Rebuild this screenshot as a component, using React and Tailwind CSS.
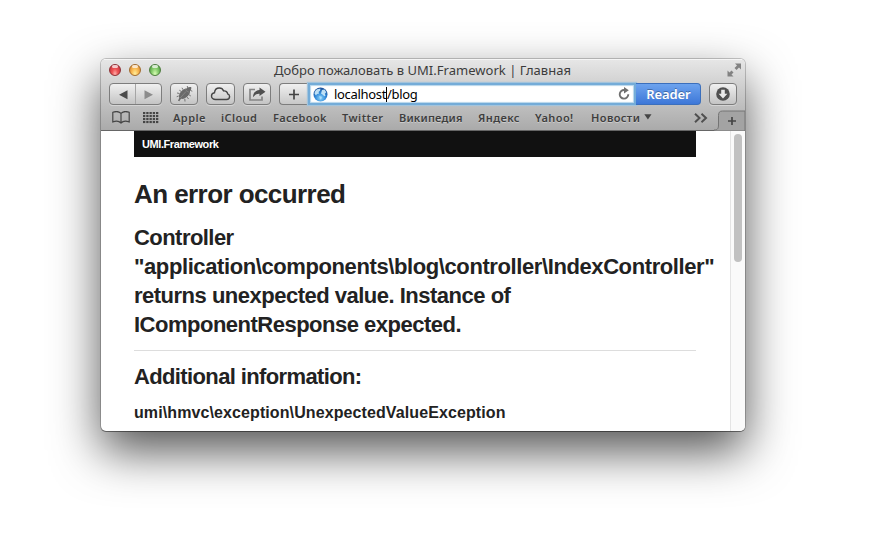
import React from "react";

const bookmarks = [
  { label: "Apple", box: "w-[48px]", track: "tracking-[0.45px]" },
  { label: "iCloud", box: "w-[52px]", track: "tracking-[0.4px]" },
  { label: "Facebook", box: "w-[69px]", track: "tracking-[0.32px]" },
  { label: "Twitter", box: "w-[57px]", track: "tracking-[0.45px]" },
  { label: "Википедия", box: "w-[79px]", track: "tracking-[0.22px]" },
  { label: "Яндекс", box: "w-[57px]", track: "tracking-[0.4px]" },
  { label: "Yahoo!", box: "w-[56px]", track: "tracking-[0.4px]" },
  { label: "Новости", box: "w-[53px]", track: "tracking-[0.4px]" },
];

const lights = [
  "border-[#8d3034] bg-[radial-gradient(ellipse_at_50%_90%,#ffb0ac_0%,#ee5557_40%,#d23c45_75%,#a82a30_100%)]",
  "border-[#a06a2c] bg-[radial-gradient(ellipse_at_50%_90%,#fff0a0_0%,#fbc25c_40%,#e69a3c_75%,#b87a34_100%)]",
  "border-[#4c7c3c] bg-[radial-gradient(ellipse_at_50%_90%,#dcffb8_0%,#92d476_40%,#62ae50_75%,#4c8a40_100%)]",
];

function Button({ className, children }) {
  return (
    <div
      className={
        "flex h-[22px] items-center justify-center rounded-[4px] border border-[#7d7d7d] bg-linear-to-b from-[#f0f0f0] to-[#c4c4c4] shadow-[0_1px_0_rgba(255,255,255,0.35)] " +
        className
      }
    >
      {children}
    </div>
  );
}

function BugIcon() {
  return (
    <svg width="18" height="18" viewBox="0 0 18 18">
      <path d="M4.300 12.800C3.300 10.500 4.900 7.300 7.400 5.200 8.800 4 10.300 3.500 11.500 3.500 12.700 2.200 14.500 2 16.200 2c.3 1.700 0 3.200-1.200 4.200.1 1.500-.5 3-1.700 4.300-2.300 2.700-5.200 3.900-7.300 3.300L4.300 16.300l-1.300-.6z" fill="#6a6a6a" />
      <path d="M8 4.700 7 2.800M6 6.300 4.300 5.200M4.500 8.500 2 8M3.700 11 1.700 11.700M14 9.800 15.800 11M12.300 12.200 13.500 14M9.800 13.900 10 16.500M12.800 3 12.200 1M15.500 5.500 17.300 6.200" fill="none" stroke="#6a6a6a" strokeWidth=".9" />
      <path d="M10.500 4.300C11.300 5.800 12.600 6.800 14.200 7.200M11 6.500 5.200 13" fill="none" stroke="#8e8e8e" strokeWidth=".7" />
    </svg>
  );
}

function Toolbar() {
  return (
    <div className="flex h-[22px] pl-2">
      <Button className="w-[53px]">
        <svg width="51" height="20" viewBox="0 0 51 20">
          <path d="M17.500 6.200v9L9 10.700z" fill="#4b4b4b" />
          <path d="M34.500 6.200v9l8.500-4.500z" fill="#8c8c8c" />
          <path d="M25.500 0v20" stroke="#a5a5a5" />
        </svg>
      </Button>
      <Button className="ml-2 w-[28px]">
        <BugIcon />
      </Button>
      <Button className="ml-2 w-[29px]">
        <svg width="21" height="16" viewBox="0 0 21 16">
          <path d="M5.500 13.500C3.300 13.500 1.500 12 1.500 10c0-1.800 1.300-3.100 3-3.300C4.800 3.800 6.800 2 9.300 2c2 0 3.600 1.100 4.300 2.900 2.200-.3 3.900 1.100 4.100 3 1.200.4 1.900 1.400 1.900 2.600 0 1.700-1.300 3-3.100 3z" fill="none" stroke="#454545" strokeWidth="1.400" />
        </svg>
      </Button>
      <Button className="ml-2 w-[28px]">
        <svg width="18" height="16" viewBox="0 0 18 16">
          <path d="M7 3.500H2v10.500h12V10.500" fill="none" stroke="#858585" strokeWidth="1.700" />
          <path d="M11.500 1.500 17.500 5.800 11.500 10V7.700C9 7.500 6.800 8.700 5 11.300 5 7 7.500 4.200 11.500 4z" fill="#505050" />
        </svg>
      </Button>
      <div className="ml-2 flex h-[22px] w-[29px] items-center justify-center rounded-l-[4px] border border-r-0 border-[#7d7d7d] bg-linear-to-b from-[#f0f0f0] to-[#c8c8c8]">
        <svg width="11" height="11" viewBox="0 0 11 11">
          <path d="M5 .5v10M0 5.500h10" stroke="#444" strokeWidth="1.700" />
        </svg>
      </div>
      <div className="flex h-[22px] w-[328px] items-center border-2 border-[#74acd8] bg-white pr-1 pl-[3px] shadow-[0_0_1px_1px_#a3c4dc,inset_0_0_1px_1px_#b5d5ec]">
        <svg width="15" height="15" viewBox="0 0 15 15">
          <defs>
            <radialGradient id="globe" cx=".5" cy=".75" r=".75">
              <stop offset="0" stopColor="#8ad4fb" />
              <stop offset=".5" stopColor="#3289d8" />
              <stop offset="1" stopColor="#174a94" />
            </radialGradient>
          </defs>
          <circle cx="7.500" cy="7.500" r="7" fill="url(#globe)" />
          <path d="M2 4.500C3.500 2 5.500 1.500 7.500 1.800L7 3.800 5.500 5l.7 1.500L4 7 3 8.500 1.500 6.500zM9 3l2.500-.4 1.800 2.700-1.500 1.500.7 2-1.200.4L9.500 7.500 8 6.500z" fill="#d8f2fd" opacity=".85" />
          <path d="M6 9l2.500.5.500 1.300-1.500 2z" fill="#d8f2fd" opacity=".5" />
        </svg>
        <div className="flex-1 pl-[6px] font-['Noto_Sans'] text-[13px] leading-4 tracking-[-0.32px] whitespace-nowrap text-black">
          localhost<span className="inline-block h-[15px] w-px bg-black align-[-3px]" />/blog
        </div>
        <svg width="12" height="14" viewBox="0 0 12 14">
          <path d="M10.300 7.300a4.300 4.300 0 1 1-3.800-4.200" fill="none" stroke="#707070" strokeWidth="1.900" />
          <path d="M6 0l4.800 3.300L6 6.500z" fill="#707070" />
        </svg>
      </div>
      <div className="flex h-[22px] w-[65px] items-center justify-center rounded-r-[4px] border border-l-0 border-[#3b6fbc] bg-linear-to-b from-[#6da3ee] to-[#3d77d8] pt-px pl-px font-['Noto_Sans'] text-[13px] font-semibold tracking-[-0.1px] text-white text-shadow-[0_-1px_0_rgba(0,0,0,0.3)]">
        Reader
      </div>
      <Button className="ml-2 w-[28px]">
        <svg width="14" height="14" viewBox="0 0 14 14">
          <circle cx="7" cy="7" r="6.800" fill="#505050" />
          <path d="M5.200 2.700h3.600v4h2.600L7 11.500 2.600 6.700h2.600z" fill="#e8e8e8" />
        </svg>
      </Button>
    </div>
  );
}

function BookmarksBar() {
  return (
    <div className="flex h-[25px] items-start pl-[11px]">
      <svg className="mt-[6px]" width="18" height="13" viewBox="0 0 18 13">
        <path d="M9 2.300C7 .3 3.500.3.800 1.300v9.700C3.500 10 7 10 9 12c2-2 5.500-2 8.200-1V1.300C14.500.3 11 .3 9 2.300zM9 2.300V12" fill="none" stroke="#454545" strokeWidth="1.200" />
      </svg>
      <svg className="mt-[7px] ml-[13px]" width="16" height="12" viewBox="0 0 16 12">
        {[0, 3, 6, 9].map((y) =>
          [0, 3.25, 6.5, 9.75, 13].map((x) => (
            <rect key={x + "-" + y} x={x} y={y} width="2.300" height="2.100" fill="#454545" />
          ))
        )}
      </svg>
      <div className="mt-[5px] ml-[14px] flex font-['Noto_Sans'] text-[11px] leading-4 font-semibold text-[#3e3e3e] text-shadow-[0_1px_0_rgba(255,255,255,0.35)]">
        {bookmarks.map((b) => (
          <div key={b.label} className={"whitespace-nowrap " + b.box + " " + b.track}>
            {b.label}
          </div>
        ))}
      </div>
      <svg className="mt-[9px]" width="8" height="6" viewBox="0 0 8 6">
        <path d="M.3.300h7.200L3.900 5.500z" fill="#454545" />
      </svg>
      <svg className="mt-[8px] ml-[42px]" width="14" height="10" viewBox="0 0 14 10">
        <path d="M1 .8 5.500 5 1 9.200M7.500.8 12 5 7.500 9.200" fill="none" stroke="#505050" strokeWidth="2" />
      </svg>
      <svg className="ml-auto" width="31" height="26" viewBox="0 0 31 26">
        <path d="M0 25C4 25 4.500 23 4.500 20V10.500C4.500 7.500 5.500 6 8.500 6H31v20H0z" fill="#a3a3a3" stroke="#747474" />
        <path d="M18 12v8M14 16h8" stroke="#454545" strokeWidth="1.700" />
      </svg>
    </div>
  );
}

export default function App() {
  return (
    <div className="h-[536px] w-[887px] overflow-hidden bg-white pt-[59px] pl-[101px]">
      <div className="flex h-[372px] w-[644px] flex-col overflow-hidden rounded-[5px] bg-white shadow-[0_0_0_1px_rgba(0,0,0,0.2),0_1px_0_0_rgba(0,0,0,0.3),0_20px_48px_rgba(0,0,0,0.68)]">
        <header className="h-[72px] shrink-0 border-t border-b border-t-[#f5f5f5] border-b-[#666] bg-linear-to-b from-[#e6e6e6] to-[#aaaaaa]">
          <div className="flex h-[23px] items-center pr-[3px] pb-[3px] pl-2">
            <div className="flex w-[52px] gap-2">
              {lights.map((c) => (
                <div key={c} className={"flex h-3 w-3 justify-center rounded-full border " + c}>
                  <div className="h-[3px] w-[6px] rounded-full bg-white/70" />
                </div>
              ))}
            </div>
            <div className="flex-1 pr-[42px] text-center font-['Noto_Sans'] text-[13px] leading-4 tracking-[0.02px] whitespace-nowrap text-[#3c3c3c]">
              Добро пожаловать в UMI.Framework | Главная
            </div>
            <svg width="16" height="16" viewBox="0 0 16 16">
              <path d="M9 1.500h6v6l-2-2-2.500 2.500L8.500 6 11 3.500zM1.500 8.500l2 2L5.500 8.500l2 2-2 2 2 2h-6z" fill="#828282" />
            </svg>
          </div>
          <Toolbar />
          <BookmarksBar />
        </header>
        <div className="flex min-h-0 flex-1">
          <main className="w-[629px] pl-[33px] font-['Liberation_Sans'] font-bold text-[#222]">
            <div className="h-[26px] w-[562px] bg-[#111] pl-2 text-[11px] leading-[27px] tracking-[-0.42px] text-white">
              UMI.Framework
            </div>
            <h1 className="mt-[19px] text-[26px] leading-[36px] tracking-[-0.57px]">An error occurred</h1>
            <h2 className="mt-[11px] text-[22px] leading-[29px] tracking-[-0.4px] whitespace-nowrap">
              <span className="tracking-[-0.55px]">Controller</span>
              <br />
              "application\components\blog\controller\IndexController"
              <br />
              <span className="tracking-[-0.5px]">returns unexpected value. Instance of</span>
              <br />
              <span className="tracking-[-0.5px]">IComponentResponse expected.</span>
            </h2>
            <hr className="mt-[11px] w-[562px] border-[#ddd]" />
            <h2 className="mt-[11px] text-[22px] leading-[30px] tracking-[-0.63px]">Additional information:</h2>
            <h3 className="mt-[10px] text-[16px] leading-[22px] tracking-[0.1px]">
              umi\hmvc\exception\UnexpectedValueException
            </h3>
          </main>
          <div className="flex flex-1 justify-center border-l border-[#e4e4e4] bg-[#fafafa] pt-[3px]">
            <div className="h-[128px] w-2 rounded-full bg-[#c1c1c1]" />
          </div>
        </div>
      </div>
    </div>
  );
}
